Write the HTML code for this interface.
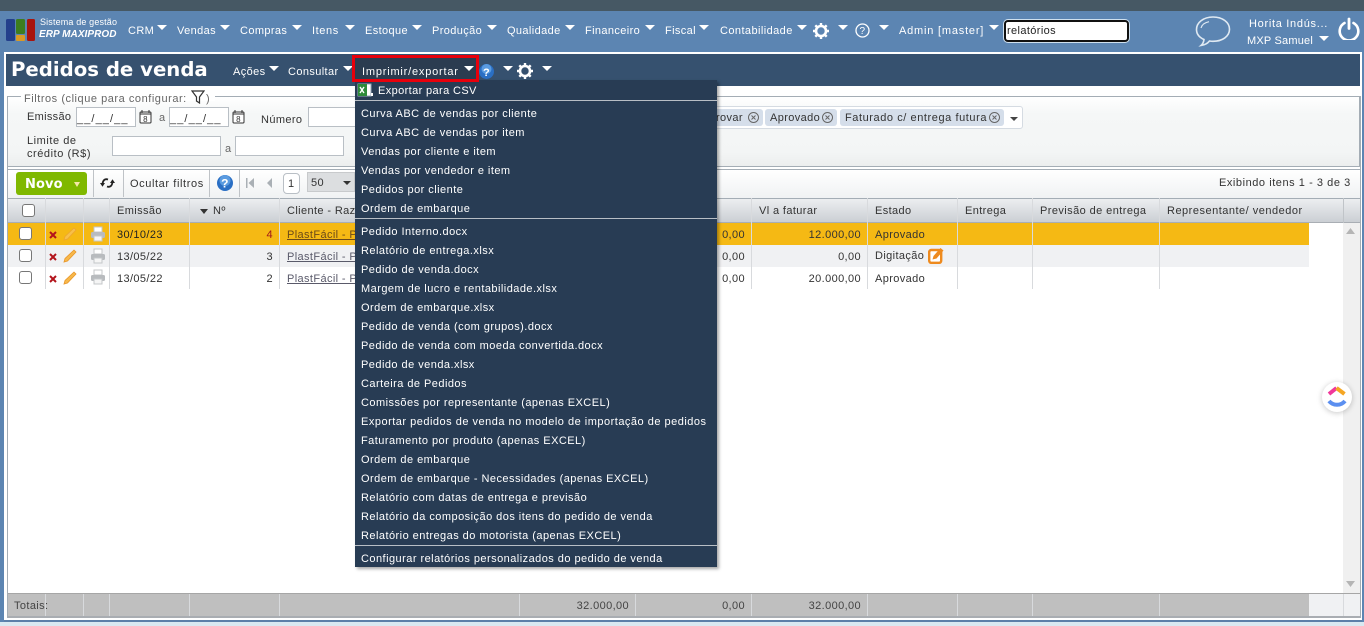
<!DOCTYPE html>
<html lang="pt-BR"><head><meta charset="utf-8"><title>Pedidos de venda</title>
<style>
html,body{margin:0;padding:0}
body{width:1364px;height:626px;overflow:hidden;position:relative;background:#fff;font:11px/14px "Liberation Sans",sans-serif;letter-spacing:.38px;color:#333}
div,span.t,svg,b.c{position:absolute}
.t{position:absolute;white-space:nowrap;margin-top:1px}
.w{color:#fff}
.c{position:absolute;width:0;height:0;border-left:5px solid transparent;border-right:5px solid transparent;border-top:5px solid #fff}
.m{position:absolute;left:6px;color:#fff;white-space:nowrap;line-height:14px;margin-top:1px;letter-spacing:.46px}
.s{position:absolute;left:0;width:362px;height:1px;background:#b8bec5}
.v{position:absolute;width:1px;background:#d8dadd}
.i{position:absolute;background:#fff;border:1px solid #b9bfc5;box-sizing:border-box}
.cb{position:absolute;width:13px;height:13px;background:#fff;border:1px solid #777;border-radius:3px;box-sizing:border-box}
u{text-decoration:underline}
</style></head><body>
<div style="left:0;top:0;width:1364px;height:11px;background:#465864"></div>
<div style="left:0;top:11px;width:1364px;height:615px;background:#5c85b2"></div>
<div style="left:0;top:622px;width:1364px;height:4px;background:#d9e9f1"></div>
<div style="left:4px;top:52px;width:1358px;height:569px;background:#fff"></div>

<!-- logo -->
<svg style="left:6px;top:19px" width="30" height="22" viewBox="0 0 30 22"><rect width="9" height="22" rx="1.500" fill="#24408c"/><rect x="10" width="9" height="15" rx="1.500" fill="#3d7d1f"/><rect x="10" y="16" width="9" height="6" rx="1" fill="#d99a25"/><rect x="21" width="8" height="22" rx="1.500" fill="#a8140e"/></svg>
<span class="t w" style="left:40px;top:15px;font-size:9px;letter-spacing:.15px;line-height:13px">Sistema de gestão</span>
<span class="t w" style="left:39px;top:27px;font-size:10px;letter-spacing:.05px;font-weight:bold;font-style:italic;line-height:14px">ERP MAXIPROD</span>

<!-- nav -->
<span class="t w" style="left:128px;top:23px">CRM</span><b class="c" style="left:157px;top:25px"></b>
<span class="t w" style="left:177px;top:23px">Vendas</span><b class="c" style="left:220px;top:25px"></b>
<span class="t w" style="left:240px;top:23px">Compras</span><b class="c" style="left:292px;top:25px"></b>
<span class="t w" style="left:312px;top:23px;letter-spacing:.6px">Itens</span><b class="c" style="left:345px;top:25px"></b>
<span class="t w" style="left:365px;top:23px">Estoque</span><b class="c" style="left:412px;top:25px"></b>
<span class="t w" style="left:432px;top:23px">Produção</span><b class="c" style="left:487px;top:25px"></b>
<span class="t w" style="left:507px;top:23px">Qualidade</span><b class="c" style="left:565px;top:25px"></b>
<span class="t w" style="left:585px;top:23px">Financeiro</span><b class="c" style="left:645px;top:25px"></b>
<span class="t w" style="left:665px;top:23px">Fiscal</span><b class="c" style="left:699px;top:25px"></b>
<span class="t w" style="left:720px;top:23px;letter-spacing:.42px">Contabilidade</span><b class="c" style="left:797px;top:25px"></b>
<svg style="left:813px;top:23px" width="16" height="16" viewBox="0 0 16 16"><circle cx="8" cy="8" r="5" fill="none" stroke="#fff" stroke-width="2.600"/><path d="M8 0v3M8 13v3M0 8h3M13 8h3M2.300 2.300l2.200 2.200M11.500 11.500l2.200 2.200M13.700 2.300l-2.200 2.200M4.500 11.500l-2.200 2.200" stroke="#fff" stroke-width="2.400"/></svg>
<b class="c" style="left:838px;top:25px"></b>
<svg style="left:855px;top:23px" width="15" height="15" viewBox="0 0 15 15"><circle cx="7.500" cy="7.500" r="6.500" fill="none" stroke="#fff" stroke-width="1.300"/><text x="7.500" y="11.200" text-anchor="middle" font-family="Liberation Sans" font-size="10" fill="#fff">?</text></svg>
<b class="c" style="left:879px;top:25px"></b>
<span class="t w" style="left:899px;top:23px;letter-spacing:.8px">Admin [master]</span><b class="c" style="left:989px;top:25px"></b>
<div style="left:1004px;top:20px;width:121px;height:18px;background:#fff;border:2px solid #111;border-radius:4px;box-shadow:0 0 0 1px #cfe0ee"></div>
<span class="t" style="left:1007px;top:23px;color:#222">relatórios</span>
<svg style="left:1195px;top:15px" width="36" height="33" viewBox="0 0 36 33"><path d="M18 2C8.500 2 1.500 7.500 1.500 14.500c0 4.500 3 8 7.500 10-.3 2.500-1.200 4.500-3 6 3.500-.5 6.500-2 8.500-4.500 1.200.2 2.300.3 3.500.3 9.500 0 16.500-5 16.500-12S27.500 2 18 2z" fill="none" stroke="#dfe9f2" stroke-width="1.600"/><path d="M6 13c1-3.500 4-5.500 8-6.300" fill="none" stroke="#dfe9f2" stroke-width="1.200"/></svg>
<span class="t w" style="left:1249px;top:16px;letter-spacing:.7px">Horita Indús...</span>
<span class="t w" style="left:1247px;top:33px;letter-spacing:.2px">MXP Samuel</span><b class="c" style="left:1319px;top:36px"></b>
<svg style="left:1338px;top:17px" width="22" height="23" viewBox="0 0 22 23"><path d="M6.500 6a9.300 9.300 0 1 0 9 0" fill="none" stroke="#fff" stroke-width="2.600" stroke-linecap="round"/><path d="M11 2v9.500" stroke="#fff" stroke-width="2.800" stroke-linecap="round"/></svg>

<!-- title bar -->
<div style="left:6px;top:54px;width:1354px;height:32px;background:#36516f"></div>
<span class="t w" style="left:11px;top:57px;margin:0;font:bold 19.700px/26px 'DejaVu Sans',sans-serif;letter-spacing:0">Pedidos de venda</span>
<span class="t w" style="left:233px;top:64px">Ações</span><b class="c" style="left:269px;top:66px"></b>
<span class="t w" style="left:288px;top:64px">Consultar</span><b class="c" style="left:343px;top:66px"></b>
<div style="left:352px;top:55px;width:121px;height:21px;background:#2b3c50;border:3px solid #e8000b;z-index:2"></div>
<span class="t w" style="left:362px;top:64px;letter-spacing:.8px;z-index:3">Imprimir/exportar</span><b class="c" style="left:464px;top:66px;z-index:3"></b>
<svg style="left:479px;top:64px" width="15" height="15" viewBox="0 0 15 15"><circle cx="7.500" cy="7.500" r="7.500" fill="#2a6fc4"/><circle cx="7.500" cy="5" r="5" fill="#5a9be0"/><text x="7.500" y="12" text-anchor="middle" font-family="Liberation Sans" font-weight="bold" font-size="11" fill="#fff">?</text></svg>
<b class="c" style="left:503px;top:66px"></b>
<svg style="left:517px;top:63px" width="16" height="16" viewBox="0 0 16 16"><circle cx="8" cy="8" r="5" fill="none" stroke="#fff" stroke-width="2.600"/><path d="M8 0v3M8 13v3M0 8h3M13 8h3M2.300 2.300l2.200 2.200M11.500 11.500l2.200 2.200M13.700 2.300l-2.200 2.200M4.500 11.500l-2.200 2.200" stroke="#fff" stroke-width="2.400"/></svg>
<b class="c" style="left:542px;top:66px"></b>

<!-- filtros -->
<div style="left:7px;top:96px;width:1351px;height:69px;border:1px solid #a4adb5;background:linear-gradient(#fff,#f5f7f7 25%,#f3f5f5 80%,#eceeee)"></div>
<div style="left:21px;top:93px;width:194px;height:8px;background:#fff"></div>
<span class="t" style="left:24px;top:91px;color:#666;letter-spacing:.54px">Filtros (clique para configurar:</span>
<svg style="left:191px;top:90px" width="14" height="14" viewBox="0 0 14 14"><path d="M1 1h12L8.500 7v6L5.500 11V7z" fill="#fff" stroke="#333" stroke-width="1.200"/></svg>
<span class="t" style="left:206px;top:91px;color:#666">)</span>
<span class="t" style="left:27px;top:109px;letter-spacing:.3px">Emissão</span>
<div class="i" style="left:76px;top:107px;width:60px;height:20px"></div>
<span class="t" style="left:77px;top:111px;letter-spacing:1.100px">__/__/__</span>
<svg style="left:139px;top:110px" width="13" height="14" viewBox="0 0 13 14"><rect x="1" y="2" width="11" height="11" rx="1" fill="#fff" stroke="#333"/><path d="M3 0v3M10 0v3M1 4h11" stroke="#333"/><text x="6.500" y="12" text-anchor="middle" font-size="8" font-family="Liberation Sans" fill="#333">8</text></svg>
<span class="t" style="left:159px;top:110px;color:#666">a</span>
<div class="i" style="left:169px;top:107px;width:60px;height:20px"></div>
<span class="t" style="left:170px;top:111px;letter-spacing:1.100px">__/__/__</span>
<svg style="left:232px;top:110px" width="13" height="14" viewBox="0 0 13 14"><rect x="1" y="2" width="11" height="11" rx="1" fill="#fff" stroke="#333"/><path d="M3 0v3M10 0v3M1 4h11" stroke="#333"/><text x="6.500" y="12" text-anchor="middle" font-size="8" font-family="Liberation Sans" fill="#333">8</text></svg>
<span class="t" style="left:261px;top:112px">Número</span>
<div class="i" style="left:308px;top:107px;width:60px;height:20px"></div>
<span class="t" style="left:27px;top:133px;letter-spacing:.55px">Limite de</span>
<span class="t" style="left:27px;top:146px;letter-spacing:.55px">crédito (R$)</span>
<div class="i" style="left:112px;top:136px;width:109px;height:20px"></div>
<span class="t" style="left:225px;top:141px;color:#666">a</span>
<div class="i" style="left:235px;top:136px;width:109px;height:20px"></div>
<div style="left:700px;top:106px;width:321px;height:21px;background:#fff;border:1px solid #d5dbe2;border-radius:3px"></div>
<div style="left:700px;top:109px;width:63px;height:17px;background:#d5deea;border-radius:3px"></div>
<span class="t" style="left:716px;top:110px">rovar</span>
<svg style="left:747px;top:111px" width="13" height="13" viewBox="0 0 13 13"><circle cx="6.500" cy="6.500" r="5" fill="none" stroke="#666"/><path d="M4.500 4.500l4 4M8.500 4.500l-4 4" stroke="#666"/></svg>
<div style="left:765px;top:109px;width:72px;height:17px;background:#d5deea;border-radius:3px"></div>
<span class="t" style="left:770px;top:110px">Aprovado</span>
<svg style="left:821px;top:111px" width="13" height="13" viewBox="0 0 13 13"><circle cx="6.500" cy="6.500" r="5" fill="none" stroke="#666"/><path d="M4.500 4.500l4 4M8.500 4.500l-4 4" stroke="#666"/></svg>
<div style="left:840px;top:109px;width:164px;height:17px;background:#d5deea;border-radius:3px"></div>
<span class="t" style="left:845px;top:110px;letter-spacing:.57px">Faturado c/ entrega futura</span>
<svg style="left:988px;top:111px" width="13" height="13" viewBox="0 0 13 13"><circle cx="6.500" cy="6.500" r="5" fill="none" stroke="#666"/><path d="M4.500 4.500l4 4M8.500 4.500l-4 4" stroke="#666"/></svg>
<b class="c" style="left:1010px;top:117px;border-left-width:4px;border-right-width:4px;border-top:4px solid #444"></b>

<!-- toolbar -->
<div style="left:7px;top:169px;width:1353px;height:29px;border-top:1px solid #a4adb5;box-sizing:border-box;background:linear-gradient(#fff,#f0f2f3)"></div>
<div style="left:16px;top:172px;width:71px;height:23px;background:#7fb800;border-radius:3px"></div>
<span class="t w" style="left:25px;top:175px;font:bold 13px/17px 'DejaVu Sans',sans-serif;letter-spacing:.1px">Novo</span>
<b class="c" style="left:74px;top:182px;border-left-width:3.500px;border-right-width:3.500px;border-top-width:5px;border-top-color:#f5e8a8"></b>
<div class="v" style="left:93px;top:170px;height:27px;background:#bfc3c7"></div>
<svg style="left:100px;top:176px" width="15" height="14" viewBox="0 0 15 14"><path d="M8 3.500C5 2.500 3 4 2.500 8" fill="none" stroke="#222" stroke-width="1.800"/><path d="M0 7h5L2.500 10.800z" fill="#222"/><path d="M7 10.500c3 1 5-.5 5.500-4.500" fill="none" stroke="#222" stroke-width="1.800"/><path d="M10 7h5L12.500 3.200z" fill="#222"/></svg>
<div class="v" style="left:123px;top:170px;height:27px;background:#bfc3c7"></div>
<span class="t" style="left:130px;top:176px;letter-spacing:.6px">Ocultar filtros</span>
<div class="v" style="left:209px;top:170px;height:27px;background:#bfc3c7"></div>
<svg style="left:217px;top:175px" width="16" height="16" viewBox="0 0 16 16"><circle cx="8" cy="8" r="8" fill="#2a6fc4"/><circle cx="8" cy="5.500" r="5.500" fill="#5a9be0"/><text x="8" y="12.500" text-anchor="middle" font-family="Liberation Sans" font-weight="bold" font-size="12" fill="#fff">?</text></svg>
<div class="v" style="left:239px;top:170px;height:27px;background:#bfc3c7"></div>
<svg style="left:245px;top:177px" width="30" height="12" viewBox="0 0 30 12"><path d="M1 1h1.500v10H1zM9 1v10L3.500 6zM27 1v10l-5-5z" fill="#aab0b5"/></svg>
<div class="i" style="left:283px;top:173px;width:17px;height:21px;border-radius:4px"></div>
<span class="t" style="left:288px;top:176px">1</span>
<div style="left:307px;top:172px;width:48px;height:20px;background:#dcdee0;border:1px solid #c8cacc;box-sizing:border-box"></div>
<span class="t" style="left:311px;top:175px">50</span>
<b class="c" style="left:343px;top:181px;border-left-width:4px;border-right-width:4px;border-top:4px solid #333"></b>
<span class="t" style="left:1219px;top:175px;letter-spacing:.55px">Exibindo itens 1 - 3 de 3</span>

<!-- grid -->
<div style="left:7px;top:198px;width:1353px;height:25px;background:linear-gradient(#eceef0,#cbcfd4);border-top:1px solid #a4adb5;border-bottom:1px solid #a9aeb4;box-sizing:border-box"></div>
<div style="left:7px;top:223px;width:1302px;height:22px;background:#f5b914"></div>
<div style="left:7px;top:245px;width:1302px;height:22px;background:#f0f1f3"></div>
<div style="left:1343px;top:198px;width:1px;height:25px;background:#c0c4c8"></div>
<div style="left:1343px;top:223px;width:17px;height:370px;background:#f0f0f0"></div>
<svg style="left:1346px;top:228px" width="9" height="6" viewBox="0 0 9 6"><path d="M4.500 0L9 6H0z" fill="#b5b5b5"/></svg>
<svg style="left:1346px;top:581px" width="9" height="6" viewBox="0 0 9 6"><path d="M4.500 6L9 0H0z" fill="#b5b5b5"/></svg>
<div class="v" style="left:45px;top:198px;height:91px"></div>
<div class="v" style="left:83px;top:198px;height:91px"></div>
<div class="v" style="left:109px;top:198px;height:91px"></div>
<div class="v" style="left:189px;top:198px;height:91px"></div>
<div class="v" style="left:279px;top:198px;height:91px"></div>
<div class="v" style="left:751px;top:198px;height:91px"></div>
<div class="v" style="left:867px;top:198px;height:91px"></div>
<div class="v" style="left:957px;top:198px;height:91px"></div>
<div class="v" style="left:1032px;top:198px;height:91px"></div>
<div class="v" style="left:1159px;top:198px;height:91px"></div>
<div class="cb" style="left:22px;top:204px"></div>
<div class="cb" style="left:19px;top:227px"></div>
<div class="cb" style="left:19px;top:249px"></div>
<div class="cb" style="left:19px;top:271px"></div>
<span class="t" style="left:117px;top:203px">Emissão</span>
<b class="c" style="left:200px;top:209px;border-left-width:4px;border-right-width:4px;border-top:5px solid #333"></b>
<span class="t" style="left:213px;top:203px">Nº</span>
<span class="t" style="left:287px;top:203px">Cliente - Razão social</span>
<span class="t" style="left:759px;top:203px">Vl a faturar</span>
<span class="t" style="left:875px;top:203px">Estado</span>
<span class="t" style="left:965px;top:203px">Entrega</span>
<span class="t" style="left:1040px;top:203px;letter-spacing:.42px">Previsão de entrega</span>
<span class="t" style="left:1167px;top:203px;letter-spacing:.5px">Representante/ vendedor</span>

<svg style="left:49px;top:230px" width="8" height="10" viewBox="0 0 8 10"><path d="M1 2l6 6M7 2L1 8" stroke="#b3141c" stroke-width="2"/></svg>
<svg style="left:49px;top:252px" width="8" height="10" viewBox="0 0 8 10"><path d="M1 2l6 6M7 2L1 8" stroke="#b3141c" stroke-width="2"/></svg>
<svg style="left:49px;top:274px" width="8" height="10" viewBox="0 0 8 10"><path d="M1 2l6 6M7 2L1 8" stroke="#b3141c" stroke-width="2"/></svg>
<svg style="left:63px;top:227px" width="14" height="14" viewBox="0 0 14 14"><path d="M1 13l1-3.500L11 1l2 2-8.500 9z" fill="#f7c04a" stroke="#eda52e" stroke-width=".8"/></svg>
<svg style="left:63px;top:249px" width="14" height="14" viewBox="0 0 14 14"><path d="M1 13l1-3.500L11 1l2 2-8.500 9z" fill="#f7b84a" stroke="#e8962a" stroke-width=".8"/></svg>
<svg style="left:63px;top:271px" width="14" height="14" viewBox="0 0 14 14"><path d="M1 13l1-3.500L11 1l2 2-8.500 9z" fill="#f7b84a" stroke="#e8962a" stroke-width=".8"/></svg>
<svg style="left:90px;top:226px" width="16" height="16" viewBox="0 0 16 16"><rect x="4" y="1" width="8" height="5" fill="#fff" stroke="#c4c7c9"/><rect x="1" y="6" width="14" height="6" rx="1.500" fill="#b8bbbe"/><rect x="4" y="10" width="8" height="5" fill="#f5f5f5" stroke="#c4c7c9"/></svg>
<svg style="left:90px;top:248px" width="16" height="16" viewBox="0 0 16 16"><rect x="4" y="1" width="8" height="5" fill="#fff" stroke="#c4c7c9"/><rect x="1" y="6" width="14" height="6" rx="1.500" fill="#b8bbbe"/><rect x="4" y="10" width="8" height="5" fill="#f5f5f5" stroke="#c4c7c9"/></svg>
<svg style="left:90px;top:269px" width="16" height="16" viewBox="0 0 16 16"><rect x="4" y="1" width="8" height="5" fill="#fff" stroke="#c4c7c9"/><rect x="1" y="6" width="14" height="6" rx="1.500" fill="#b8bbbe"/><rect x="4" y="10" width="8" height="5" fill="#f5f5f5" stroke="#c4c7c9"/></svg>

<span class="t" style="left:117px;top:227px;color:#222">30/10/23</span>
<span class="t" style="left:117px;top:249px">13/05/22</span>
<span class="t" style="left:117px;top:271px">13/05/22</span>
<span class="t" style="right:1091px;top:227px;color:#a01818">4</span>
<span class="t" style="right:1091px;top:249px">3</span>
<span class="t" style="right:1091px;top:271px">2</span>
<span class="t" style="left:287px;top:227px;color:#6b4a1a"><u>PlastFácil - Plástico</u></span>
<span class="t" style="left:287px;top:249px;color:#5a5a6a"><u>PlastFácil - Plástico</u></span>
<span class="t" style="left:287px;top:271px;color:#5a5a6a"><u>PlastFácil - Plástico</u></span>
<span class="t" style="right:619px;top:227px">0,00</span>
<span class="t" style="right:619px;top:249px">0,00</span>
<span class="t" style="right:619px;top:271px">0,00</span>
<span class="t" style="right:503px;top:227px">12.000,00</span>
<span class="t" style="right:503px;top:249px">0,00</span>
<span class="t" style="right:503px;top:271px">20.000,00</span>
<span class="t" style="left:875px;top:227px">Aprovado</span>
<span class="t" style="left:875px;top:248px">Digitação</span>
<span class="t" style="left:875px;top:271px">Aprovado</span>
<svg style="left:928px;top:247px" width="16" height="17" viewBox="0 0 16 17"><rect x="1.200" y="3" width="12" height="12.800" rx="2" fill="#fff" stroke="#ee8a1e" stroke-width="2.400"/><path d="M4.500 12.500l1-3.500 7-8 3 2.500-7 8z" fill="#ee8a1e"/></svg>

<!-- totals -->
<div style="left:7px;top:593px;width:1353px;height:23px;background:#bfbfbf;border-top:1px solid #a6a6a6;box-sizing:border-box"></div>
<div style="left:1309px;top:594px;width:51px;height:22px;background:#f0f1f3"></div>
<div style="left:7px;top:616px;width:1353px;height:2px;background:#a9adb2"></div>
<div style="left:4px;top:620px;width:1358px;height:2px;background:#5c7fa8"></div>
<div class="v" style="left:45px;top:594px;height:22px"></div>
<div class="v" style="left:83px;top:594px;height:22px"></div>
<div class="v" style="left:109px;top:594px;height:22px"></div>
<div class="v" style="left:189px;top:594px;height:22px"></div>
<div class="v" style="left:279px;top:594px;height:22px"></div>
<div class="v" style="left:519px;top:594px;height:22px"></div>
<div class="v" style="left:635px;top:594px;height:22px"></div>
<div class="v" style="left:751px;top:594px;height:22px"></div>
<div class="v" style="left:867px;top:594px;height:22px"></div>
<div class="v" style="left:957px;top:594px;height:22px"></div>
<div class="v" style="left:1032px;top:594px;height:22px"></div>
<div class="v" style="left:1159px;top:594px;height:22px"></div>
<div class="v" style="left:1343px;top:594px;height:22px"></div>
<div style="left:7px;top:166px;width:1px;height:452px;background:#a4adb5"></div>
<div style="left:1360px;top:96px;width:1px;height:522px;background:#a4adb5"></div>
<span class="t" style="left:14px;top:598px;color:#444">Totais:</span>
<span class="t" style="right:735px;top:598px;color:#444">32.000,00</span>
<span class="t" style="right:619px;top:598px;color:#444">0,00</span>
<span class="t" style="right:503px;top:598px;color:#444">32.000,00</span>

<!-- clickup -->
<div style="left:1322px;top:382px;width:30px;height:30px;border-radius:50%;background:#fff;box-shadow:0 1px 6px rgba(0,0,0,.22)"></div>
<svg style="left:1327px;top:385px" width="20" height="24" viewBox="0 0 20 24"><path d="M2 9L9.500 3" stroke="#f0389a" stroke-width="4" fill="none"/><path d="M9.500 3l8 6" stroke="#f5a623" stroke-width="4" fill="none"/><path d="M2 16c4 5 12 5 16 0" stroke="#5b8ff0" stroke-width="4" fill="none"/></svg>

<!-- dropdown -->
<div style="left:355px;top:80px;width:362px;height:487px;background:#283c54;box-shadow:2px 2px 3px rgba(0,0,0,.35)">
<svg style="position:absolute;left:2px;top:3px" width="17" height="14" viewBox="0 0 17 14"><rect x="1" y="1" width="13" height="12" fill="#fff" stroke="#9ab"/><rect x="1" y="1" width="9" height="12" fill="#2e8b3a"/><path d="M3 4l4 6M7 4l-4 6" stroke="#fff" stroke-width="1.400"/><rect x="14" y="10" width="2" height="3" fill="#fff"/></svg>
<span class="m" style="left:23px;top:3px;letter-spacing:.38px">Exportar para CSV</span>
<div class="s" style="top:20px"></div>
<span class="m" style="top:26px">Curva ABC de vendas por cliente</span>
<span class="m" style="top:45px">Curva ABC de vendas por item</span>
<span class="m" style="top:64px">Vendas por cliente e item</span>
<span class="m" style="top:83px">Vendas por vendedor e item</span>
<span class="m" style="top:102px">Pedidos por cliente</span>
<span class="m" style="top:121px">Ordem de embarque</span>
<div class="s" style="top:138px"></div>
<span class="m" style="top:144px">Pedido Interno.docx</span>
<span class="m" style="top:163px">Relatório de entrega.xlsx</span>
<span class="m" style="top:182px">Pedido de venda.docx</span>
<span class="m" style="top:201px">Margem de lucro e rentabilidade.xlsx</span>
<span class="m" style="top:220px">Ordem de embarque.xlsx</span>
<span class="m" style="top:239px">Pedido de venda (com grupos).docx</span>
<span class="m" style="top:258px">Pedido de venda com moeda convertida.docx</span>
<span class="m" style="top:277px">Pedido de venda.xlsx</span>
<span class="m" style="top:296px">Carteira de Pedidos</span>
<span class="m" style="top:315px">Comissões por representante (apenas EXCEL)</span>
<span class="m" style="top:334px;letter-spacing:.5px">Exportar pedidos de venda no modelo de importação de pedidos</span>
<span class="m" style="top:353px">Faturamento por produto (apenas EXCEL)</span>
<span class="m" style="top:372px">Ordem de embarque</span>
<span class="m" style="top:391px">Ordem de embarque - Necessidades (apenas EXCEL)</span>
<span class="m" style="top:410px">Relatório com datas de entrega e previsão</span>
<span class="m" style="top:429px">Relatório da composição dos itens do pedido de venda</span>
<span class="m" style="top:448px">Relatório entregas do motorista (apenas EXCEL)</span>
<div class="s" style="top:465px"></div>
<span class="m" style="top:471px">Configurar relatórios personalizados do pedido de venda</span>
</div>
</body></html>
